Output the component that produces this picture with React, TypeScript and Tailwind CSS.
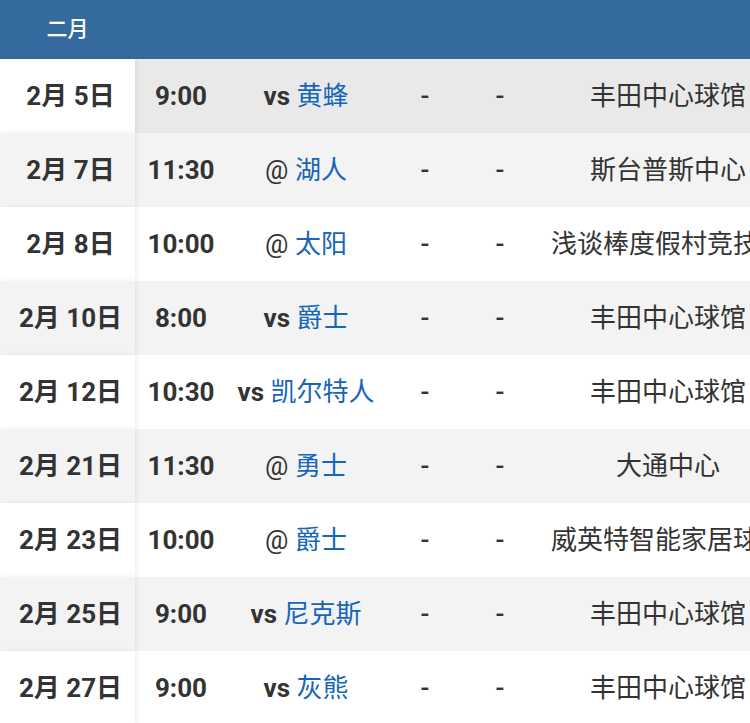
import React from "react";

type Game = {
  date: string;
  time: string;
  home: boolean;
  team: string;
  venue: string;
};

const games: Game[] = [
  { date: "2月 5日", time: "9:00", home: true, team: "黄蜂", venue: "丰田中心球馆" },
  { date: "2月 7日", time: "11:30", home: false, team: "湖人", venue: "斯台普斯中心" },
  { date: "2月 8日", time: "10:00", home: false, team: "太阳", venue: "浅谈棒度假村竞技场" },
  { date: "2月 10日", time: "8:00", home: true, team: "爵士", venue: "丰田中心球馆" },
  { date: "2月 12日", time: "10:30", home: true, team: "凯尔特人", venue: "丰田中心球馆" },
  { date: "2月 21日", time: "11:30", home: false, team: "勇士", venue: "大通中心" },
  { date: "2月 23日", time: "10:00", home: false, team: "爵士", venue: "威英特智能家居球场" },
  { date: "2月 25日", time: "9:00", home: true, team: "尼克斯", venue: "丰田中心球馆" },
  { date: "2月 27日", time: "9:00", home: true, team: "灰熊", venue: "丰田中心球馆" },
];

export default function App() {
  return (
    <div
      className="w-[750px] h-[723px] overflow-hidden bg-white text-[#333]"
      style={{ fontFamily: 'Roboto, "Noto Sans CJK SC", sans-serif' }}
    >
      <div className="w-[801px]">
        {/* Header */}
        <div className="h-[59px] bg-[#356a9f] flex">
          <div className="w-[135px] flex items-center justify-center text-white text-[21px] font-medium">
            二月
          </div>
        </div>

        {/* Rows */}
        {games.map((g, i) => {
          const first = i === 0;
          const rowBg = first ? "bg-[#e9e9e9]" : i % 2 === 1 ? "bg-[#f3f3f3]" : "bg-white";
          const dateBg = first ? "bg-white" : i % 2 === 1 ? "bg-[#f3f3f3]" : "bg-white";
          return (
            <div key={i} className={`h-[74px] flex items-center text-[26px] ${rowBg}`}>
              <div
                className={`w-[135px] h-full pl-[6px] flex items-center justify-center font-bold relative z-10 shadow-[2px_0_5px_rgba(0,0,0,0.07)] ${dateBg}`}
              >
                {g.date}
              </div>
              <div className="w-[92px] text-center font-bold">{g.time}</div>
              <div className="w-[158px] text-center whitespace-nowrap">
                {g.home ? <span className="font-bold">vs</span> : <span>@</span>}{" "}
                <span className="text-[#1565b8]">{g.team}</span>
              </div>
              <div className="w-[80px] text-center font-medium">-</div>
              <div className="w-[70px] text-center font-medium">-</div>
              <div className="w-[266px] text-center whitespace-nowrap">{g.venue}</div>
            </div>
          );
        })}
      </div>
    </div>
  );
}
